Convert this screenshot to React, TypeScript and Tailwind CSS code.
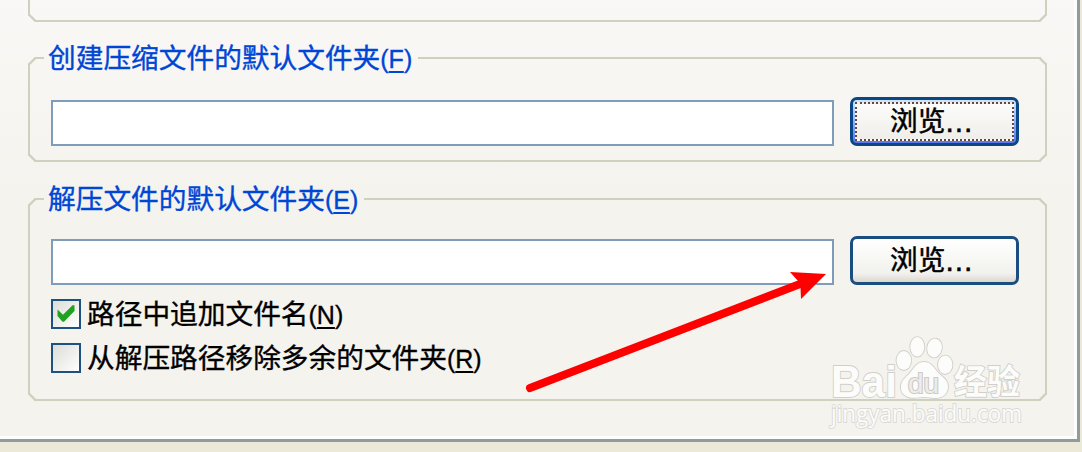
import React from 'react';

interface LabelTextProps {
  text: string;
  hotkey: string;
}

const LabelText: React.FC<LabelTextProps> = ({ text, hotkey }) => (
  <span className="flex items-baseline whitespace-nowrap pt-px leading-[30px] [-webkit-text-stroke:0.35px]">
    <span className="text-[27.7px]">{text}</span>
    <span className="text-[25px]">
      (<span className="underline decoration-2 underline-offset-[3px]">{hotkey}</span>)
    </span>
  </span>
);

interface GroupProps {
  label: string;
  hotkey: string;
  className: string;
  children: React.ReactNode;
}

const Group: React.FC<GroupProps> = ({ label, hotkey, className, children }) => (
  <fieldset className={`rounded-[7px] border-2 border-[#d0d0bf] pl-[14px] pr-[26px] [corner-shape:bevel] ${className}`}>
    <legend className="h-[30px] pl-1 pr-[6px] text-[#0046d5]">
      <LabelText text={label} hotkey={hotkey} />
    </legend>
    {children}
  </fieldset>
);

const PathRow: React.FC<{ focused?: boolean }> = ({ focused = false }) => (
  <div className="flex items-end pl-[7px]">
    <input type="text" className="h-[46px] w-[783px] border-2 border-[#7f9db9] bg-white outline-none" />
    <button
      type="button"
      className={`ml-4 h-[49px] w-[169px] shrink-0 rounded-[7px] text-black ${
        focused
          ? 'border-[3px] border-[#0b4785] bg-linear-to-b from-[#cee7ff] to-[#5a78ea] p-[2px]'
          : 'border-[3px] border-[#1a4d80] bg-linear-to-b from-white via-[#f1f1ed] via-80% to-[#dcd8cf]'
      }`}
    >
      <span
        className={`flex h-full items-center pt-px text-[27.7px] leading-none [-webkit-text-stroke:0.5px] ${
          focused ? 'border-2 border-dotted border-[#65483f] bg-linear-to-b from-[#fcfcfb] to-[#efeee9] pl-[33px]' : 'pl-[37px]'
        }`}
      >
        浏览
        <span className="text-[30px] leading-none tracking-[1px]">...</span>
      </span>
    </button>
  </div>
);

interface CheckRowProps {
  label: string;
  hotkey: string;
  checked?: boolean;
}

const CheckRow: React.FC<CheckRowProps> = ({ label, hotkey, checked = false }) => (
  <label className="flex h-[30px] items-center pl-[7px] text-black">
    <span className="flex size-[30px] items-center justify-center border-2 border-[#1c5180] bg-linear-to-br from-[#dcdcd7] to-white">
      {checked && (
        <svg viewBox="0 0 18 18" className="size-[18px]">
          <path d="M0.5 4.5 L6 9.8 L15.5 0.3 H17.5 V6 L7 16.7 H5.5 L0.5 11 Z" fill="#21a121" />
        </svg>
      )}
    </span>
    <span className="ml-[6px]">
      <LabelText text={label} hotkey={hotkey} />
    </span>
  </label>
);

const Watermark: React.FC = () => (
  <svg
    viewBox="825 330 205 105"
    className="absolute left-[825px] top-[330px] h-[105px] w-[205px]"
    fill="#fcfcfa"
    stroke="#d0cfca"
    strokeWidth="1.8"
    paintOrder="stroke"
  >
    <text x="831" y="396.5" fontSize="44" fontWeight="700" textLength="66" lengthAdjust="spacingAndGlyphs">
      Bai
    </text>
    <ellipse cx="903.8" cy="360.5" rx="7.3" ry="9.5" />
    <ellipse cx="917.3" cy="346.8" rx="7" ry="9.7" />
    <ellipse cx="934.5" cy="348" rx="7.3" ry="9.5" transform="rotate(10 934.5 348)" />
    <ellipse cx="945.2" cy="364.8" rx="7.2" ry="9.2" />
    <path d="M924 362 C930.5 362 933.5 367 937 371.5 C941 376.5 948.5 379 948 387.5 C947.5 394.5 942 398 936 398 C931 398 928 397 924 397 C919 397 915 398.5 910 397.5 C903 396 900 391 901 385 C902 379 908 376 911.5 371 C915 366 918 362 924 362 Z" />
    <text x="908" y="392.5" fontSize="27" textLength="31" lengthAdjust="spacingAndGlyphs" fill="#eeede9" stroke="#cccbc6" strokeWidth="2.2">
      du
    </text>
    <text x="954" y="393.5" fontSize="34" fontWeight="700" textLength="66" lengthAdjust="spacingAndGlyphs">
      经验
    </text>
    <text x="831" y="422" fontSize="23" textLength="191" lengthAdjust="spacingAndGlyphs" stroke="#dad9d4" className="font-['Open_Sans',sans-serif]">
      jingyan.baidu.com
    </text>
  </svg>
);

const App: React.FC = () => (
  <div className="relative h-[452px] w-[1082px] overflow-hidden bg-[#ece9d8] font-['Liberation_Sans','Noto_Sans_CJK_SC',sans-serif]">
    <div className="h-[442px] w-[1080px] border-b-[3px] border-r-[3px] border-[#919b9c]">
      <div className="h-full w-full border-b-[3px] border-r-[3px] border-[#fdfdfd] bg-linear-to-b from-[#f9f8f6] via-[#f4f3ee] via-45% to-[#f4f3ee] pl-7">
        <div className="h-[22px] w-[1019px] rounded-b-[7px] border-2 border-t-0 border-[#d0d0bf] [corner-shape:bevel]" />

        <Group label="创建压缩文件的默认文件夹" hotkey="F" className="mt-[21px] h-[119px] w-[1019px]">
          <div className="pt-[24px]">
            <PathRow focused />
          </div>
        </Group>

        <Group label="解压文件的默认文件夹" hotkey="E" className="mt-[22px] h-[217px] w-[1019px]">
          <div className="pt-[22px]">
            <PathRow />
          </div>
          <div className="mt-[14px] flex flex-col gap-[14px]">
            <CheckRow label="路径中追加文件名" hotkey="N" checked />
            <CheckRow label="从解压路径移除多余的文件夹" hotkey="R" />
          </div>
        </Group>
      </div>
    </div>

    <svg viewBox="0 0 1082 452" className="pointer-events-none absolute inset-0 h-full w-full">
      <line x1="530" y1="388" x2="800" y2="284" stroke="#fe0000" strokeWidth="8" strokeLinecap="round" />
      <path d="M790 272 L826 274 L801 299 L800.5 287 L798 281 Z" fill="#fe0000" />
    </svg>
    <Watermark />
  </div>
);

export default App;
